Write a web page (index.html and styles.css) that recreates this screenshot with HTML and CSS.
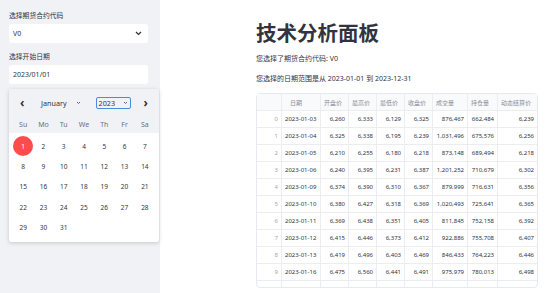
FILE: index.html
```html
<!DOCTYPE html>
<html lang="zh">
<head>
    <meta charset="UTF-8">
    <title>技术分析面板</title>
    <link rel="stylesheet" href="styles.css">
</head>
<body>
    <aside class="sidebar">
        <label class="field-label">选择期货合约代码</label>
        <div class="select-box">
            <span>V0</span>
            <svg class="chevron" width="7" height="5" viewBox="0 0 7 5"><path d="M1 1 L3.5 3.5 L6 1" fill="none" stroke="#31333f" stroke-width="1.2"/></svg>
        </div>
        <label class="field-label second">选择开始日期</label>
        <div class="select-box">
            <span>2023/01/01</span>
        </div>

        <div class="calendar">
            <div class="cal-head">
                <div class="cal-nav">
                    <span class="nav-btn prev">‹</span>
                    <span class="month">January</span>
                    <svg class="small-chev" width="5" height="4" viewBox="0 0 5 4"><path d="M1 1 L2.5 2.5 L4 1" fill="none" stroke="#555" stroke-width="0.9"/></svg>
                    <span class="year-box">2023
                        <svg class="small-chev" width="5" height="4" viewBox="0 0 5 4"><path d="M1 1 L2.5 2.5 L4 1" fill="none" stroke="#555" stroke-width="0.9"/></svg>
                    </span>
                    <span class="nav-btn next">›</span>
                </div>
                <div class="weekdays">
                    <span>Su</span><span>Mo</span><span>Tu</span><span>We</span><span>Th</span><span>Fr</span><span>Sa</span>
                </div>
            </div>
            <div class="days" id="days"></div>
        </div>
    </aside>

    <main class="main">
        <h1>技术分析面板</h1>
        <p class="info">您选择了期货合约代码: V0</p>
        <p class="info">您选择的日期范围是从 2023-01-01 到 2023-12-31</p>

        <table class="grid">
            <thead>
                <tr>
                    <th class="idx"></th>
                    <th class="date-col">日期</th>
                    <th>开盘价</th>
                    <th>最高价</th>
                    <th>最低价</th>
                    <th>收盘价</th>
                    <th>成交量</th>
                    <th>持仓量</th>
                    <th>动态结算价</th>
                </tr>
            </thead>
            <tbody id="rows"></tbody>
        </table>
    </main>

    <script>
        const days = document.getElementById('days');
        for (let d = 1; d <= 31; d++) {
            const cell = document.createElement('span');
            cell.textContent = d;
            if (d === 1) cell.className = 'selected';
            days.appendChild(cell);
        }

        const data = [
            ['2023-01-03', '6,260', '6,333', '6,129', '6,325', '876,467', '662,484', '6,239'],
            ['2023-01-04', '6,325', '6,338', '6,195', '6,239', '1,031,496', '675,576', '6,256'],
            ['2023-01-05', '6,210', '6,255', '6,180', '6,218', '873,148', '689,494', '6,218'],
            ['2023-01-06', '6,240', '6,395', '6,231', '6,387', '1,201,252', '710,679', '6,302'],
            ['2023-01-09', '6,374', '6,390', '6,310', '6,367', '879,999', '716,631', '6,356'],
            ['2023-01-10', '6,380', '6,427', '6,318', '6,369', '1,020,493', '725,641', '6,365'],
            ['2023-01-11', '6,369', '6,438', '6,351', '6,405', '811,845', '752,158', '6,392'],
            ['2023-01-12', '6,415', '6,446', '6,373', '6,412', '922,886', '755,708', '6,407'],
            ['2023-01-13', '6,419', '6,496', '6,403', '6,469', '846,433', '764,223', '6,446'],
            ['2023-01-16', '6,475', '6,560', '6,441', '6,491', '975,979', '780,013', '6,498']
        ];

        const rows = document.getElementById('rows');
        data.forEach((row, i) => {
            const tr = document.createElement('tr');
            let html = `<td class="idx">${i}</td><td class="date-col">${row[0]}</td>`;
            for (let c = 1; c < row.length; c++) html += `<td>${row[c]}</td>`;
            tr.innerHTML = html;
            rows.appendChild(tr);
        });
        const filler = document.createElement('tr');
        filler.className = 'filler';
        filler.innerHTML = '<td></td>'.repeat(9);
        rows.appendChild(filler);
    </script>
</body>
</html>
```

FILE: styles.css
```css
body {
    margin: 0;
    font-family: "Noto Sans", "Noto Sans CJK SC", sans-serif;
    color: #31333f;
    display: flex;
    height: 293px;
    overflow: hidden;
    background: #fff;
}

.sidebar {
    position: relative;
    width: 160px;
    flex-shrink: 0;
    background: #f0f2f6;
    box-sizing: border-box;
    padding: 11px 12px 0 9px;
}

.field-label {
    display: block;
    font-size: 6.8px;
    line-height: 10px;
    height: 10px;
}

.field-label.second {
    margin-top: 9px;
}

.select-box {
    margin-top: 3px;
    height: 19px;
    background: #fff;
    border-radius: 3px;
    display: flex;
    align-items: center;
    justify-content: space-between;
    padding: 0 6px 0 4px;
    font-size: 7px;
}

.chevron {
    display: block;
}

.calendar {
    position: absolute;
    top: 89px;
    left: 9px;
    width: 150px;
    height: 153px;
    background: #fff;
    border-radius: 3px;
    overflow: hidden;
    box-shadow: 0 1px 4px rgba(0, 0, 0, 0.18);
    z-index: 2;
}

.cal-head {
    background: #f0f2f6;
}

.cal-nav {
    height: 28px;
    display: flex;
    align-items: center;
    padding-left: 11px;
    font-size: 7.2px;
}

.nav-btn {
    font-size: 12px;
    font-weight: bold;
    width: 6px;
    line-height: 12px;
    color: #31333f;
}

.month {
    margin-left: 15px;
}

.small-chev {
    display: block;
    margin-left: 9px;
}

.year-box {
    margin-left: 15px;
    width: 35px;
    height: 12px;
    box-sizing: border-box;
    border: 1px solid #4a8be0;
    border-radius: 2px;
    display: flex;
    align-items: center;
    padding-left: 2px;
}

.year-box .small-chev {
    margin-left: 8px;
}

.next {
    margin-left: 13px;
}

.weekdays,
.days {
    display: grid;
    grid-template-columns: repeat(7, 1fr);
    padding: 0 4px;
    text-align: center;
}

.weekdays {
    height: 16px;
    line-height: 16px;
    font-size: 7px;
    color: #6d707a;
}

.days {
    padding-top: 3px;
    grid-auto-rows: 20.3px;
    font-size: 6.5px;
}

.days span {
    display: flex;
    align-items: center;
    justify-content: center;
}

.days .selected::before {
    content: "";
    position: absolute;
    width: 20px;
    height: 20px;
    border-radius: 50%;
    background: #ff4b4b;
    z-index: -1;
}

.days .selected {
    position: relative;
    color: #fff;
    z-index: 0;
}

.main {
    flex: 1;
    padding-left: 96px;
}

h1 {
    margin: 20px 0 0;
    font-size: 20.5px;
    line-height: 26px;
    font-weight: 700;
}

.info {
    margin: 0;
    font-size: 7px;
    line-height: 20px;
}

.info:first-of-type {
    margin-top: 3px;
}

.grid {
    margin-top: 4px;
    width: 282px;
    border-collapse: separate;
    border-spacing: 0;
    border: 1px solid #e6e9ef;
    border-radius: 4px;
    table-layout: fixed;
    font-size: 6px;
}

.grid th,
.grid td {
    height: 16px;
    padding: 0 3px;
    border-right: 1px solid #ebedf1;
    border-bottom: 1px solid #ebedf1;
    white-space: nowrap;
    overflow: hidden;
}

.grid th:last-child,
.grid td:last-child {
    border-right: none;
}

.grid th {
    font-weight: normal;
    text-align: left;
    color: #8b8e99;
    background: #f9fafb;
}

.grid td {
    text-align: right;
}

.grid .idx {
    width: 18px;
    color: #a3a8b4;
}

.grid th.date-col {
    padding-left: 8px;
}

.grid td.date-col {
    text-align: left;
    width: 31px;
}

.grid th:nth-child(3), .grid th:nth-child(4),
.grid th:nth-child(5), .grid th:nth-child(6) {
    width: 21px;
}

.grid th:nth-child(7) {
    width: 28px;
}

.grid th:nth-child(8) {
    width: 23px;
}

.grid .filler td {
    height: 6px;
    border-bottom: none;
}
```
